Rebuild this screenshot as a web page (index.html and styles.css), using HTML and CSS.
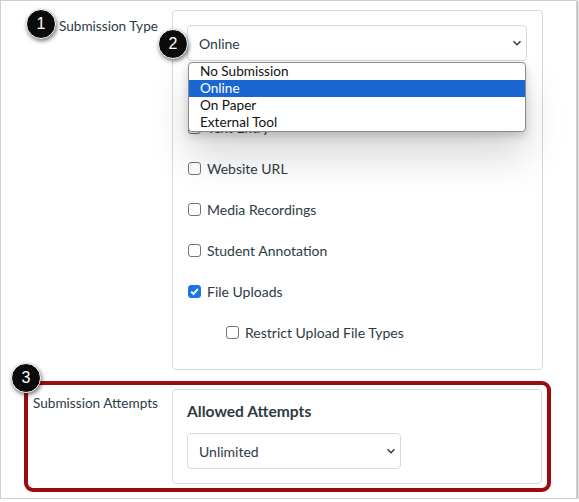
FILE: index.html
```html
<!DOCTYPE html>
<html>
<head>
<meta charset="utf-8">
<link rel="stylesheet" href="styles.css">
</head>
<body>
<div class="frame">
  <div class="row-type">
    <div class="label label-type">Submission Type</div>
    <div class="panel panel-type">
      <div class="select select-wide">
        <span>Online</span>
        <svg class="chev" width="10" height="6" viewBox="0 0 10 6"><path d="M1.5 1.2 L5 4.7 L8.5 1.2" fill="none" stroke="#2d3b45" stroke-width="1.5"/></svg>
      </div>
      <div class="checks">
        <label class="check"><span class="box"></span>Text Entry</label>
        <label class="check"><span class="box"></span>Website URL</label>
        <label class="check"><span class="box"></span>Media Recordings</label>
        <label class="check"><span class="box"></span>Student Annotation</label>
        <label class="check"><span class="box checked"><svg width="11" height="11" viewBox="0 0 11 11"><path d="M2.2 5.8 L4.5 8 L8.8 2.8" fill="none" stroke="#fff" stroke-width="1.9"/></svg></span>File Uploads</label>
        <label class="check sub"><span class="box"></span>Restrict Upload File Types</label>
      </div>
      <ul class="dropdown">
        <li>No Submission</li>
        <li class="active">Online</li>
        <li>On Paper</li>
        <li>External Tool</li>
      </ul>
    </div>
  </div>

  <div class="row-attempts">
    <div class="label label-attempts">Submission Attempts</div>
    <div class="panel panel-attempts">
      <div class="heading">Allowed Attempts</div>
      <div class="select select-narrow">
        <span>Unlimited</span>
        <svg class="chev" width="10" height="6" viewBox="0 0 10 6"><path d="M1.5 1.2 L5 4.7 L8.5 1.2" fill="none" stroke="#2d3b45" stroke-width="1.5"/></svg>
      </div>
    </div>
  </div>

  <div class="badge b1">1</div>
  <div class="badge b2">2</div>
  <div class="badge b3">3</div>
</div>
</body>
</html>
```
FILE: styles.css
```css
* { box-sizing: border-box; }
html, body { margin: 0; padding: 0; background: #fff; }
body { font-family: Lato, "Liberation Sans", sans-serif; color: #2d3b45; }

.frame {
  position: relative;
  width: 577px;
  height: 499px;
  border: 1px solid #cfcfcf;
  box-shadow: 1px 1px 2px rgba(0,0,0,0.35);
  background: #fff;
  overflow: hidden;
}

.row-type {
  display: flex;
  padding-top: 9px;
}
.label {
  font-size: 13.6px;
  line-height: 18px;
  color: #2d3b45;
}
.label-type {
  width: 171px;
  padding-left: 58px;
  padding-top: 7px;
}

.panel {
  position: relative;
  border: 1px solid #d7dadd;
  border-radius: 4px;
  background: #fff;
}
.panel-type {
  width: 371px;
  height: 360px;
  padding: 14px;
}

.select {
  display: flex;
  align-items: center;
  justify-content: space-between;
  height: 36px;
  border: 1px solid #d7dadd;
  border-radius: 4px;
  padding: 0 4px 0 11px;
  font-size: 14px;
  color: #2d3b45;
  background: #fff;
}
.select-wide { width: 340px; }
.chev { display: block; }

.checks {
  display: flex;
  flex-direction: column;
  gap: 23px;
  margin-top: 57px;
}
.check {
  display: flex;
  align-items: center;
  height: 18px;
  font-size: 14px;
  color: #2d3b45;
  padding-left: 1px;
}
.check.sub { padding-left: 39px; }
.box {
  width: 13px;
  height: 13px;
  border: 1px solid #6b7780;
  border-radius: 3px;
  margin-right: 6px;
  display: flex;
  align-items: center;
  justify-content: center;
  background: #fff;
}
.box.checked { background: #1a73e8; border-color: #1a73e8; }
.box svg { display: block; }

.dropdown {
  position: absolute;
  left: 15px;
  top: 51px;
  width: 338px;
  margin: 0;
  padding: 0;
  list-style: none;
  border: 1px solid #8a8a8a;
  border-radius: 4px;
  background: #fff;
  box-shadow: 0 4px 10px rgba(0,0,0,0.18), 0 24px 40px rgba(0,0,0,0.16);
  font-size: 13.6px;
  line-height: 17px;
  color: #111;
}
.dropdown li { padding-left: 11px; height: 17px; }
.dropdown li.active { background: #1a67d2; color: #fff; }

.row-attempts {
  display: flex;
  margin: 11px 0 0 23px;
  width: 527px;
  height: 111px;
  border: 4px solid #9e0b0f;
  border-radius: 9px;
  align-items: flex-start;
}
.label-attempts {
  width: 144px;
  padding-left: 5px;
  padding-top: 9px;
}
.panel-attempts {
  width: 370px;
  height: 95px;
  margin-top: 4px;
  padding: 10px 14px;
}
.heading {
  font-size: 15.6px;
  font-weight: 700;
  line-height: 22px;
  color: #2d3b45;
  margin-bottom: 11px;
}
.select-narrow { width: 214px; }

.badge {
  position: absolute;
  width: 30px;
  height: 30px;
  border-radius: 50%;
  background: #0b0b0b;
  border: 1.5px solid #fff;
  box-shadow: 1px 2px 4px rgba(0,0,0,0.55);
  color: #fff;
  font-family: "Liberation Sans", Arial, sans-serif;
  font-size: 16px;
  display: flex;
  align-items: center;
  justify-content: center;
}
.b1 { left: 25px; top: 8px; }
.b2 { left: 157px; top: 28px; }
.b3 { left: 10px; top: 362px; }
```
